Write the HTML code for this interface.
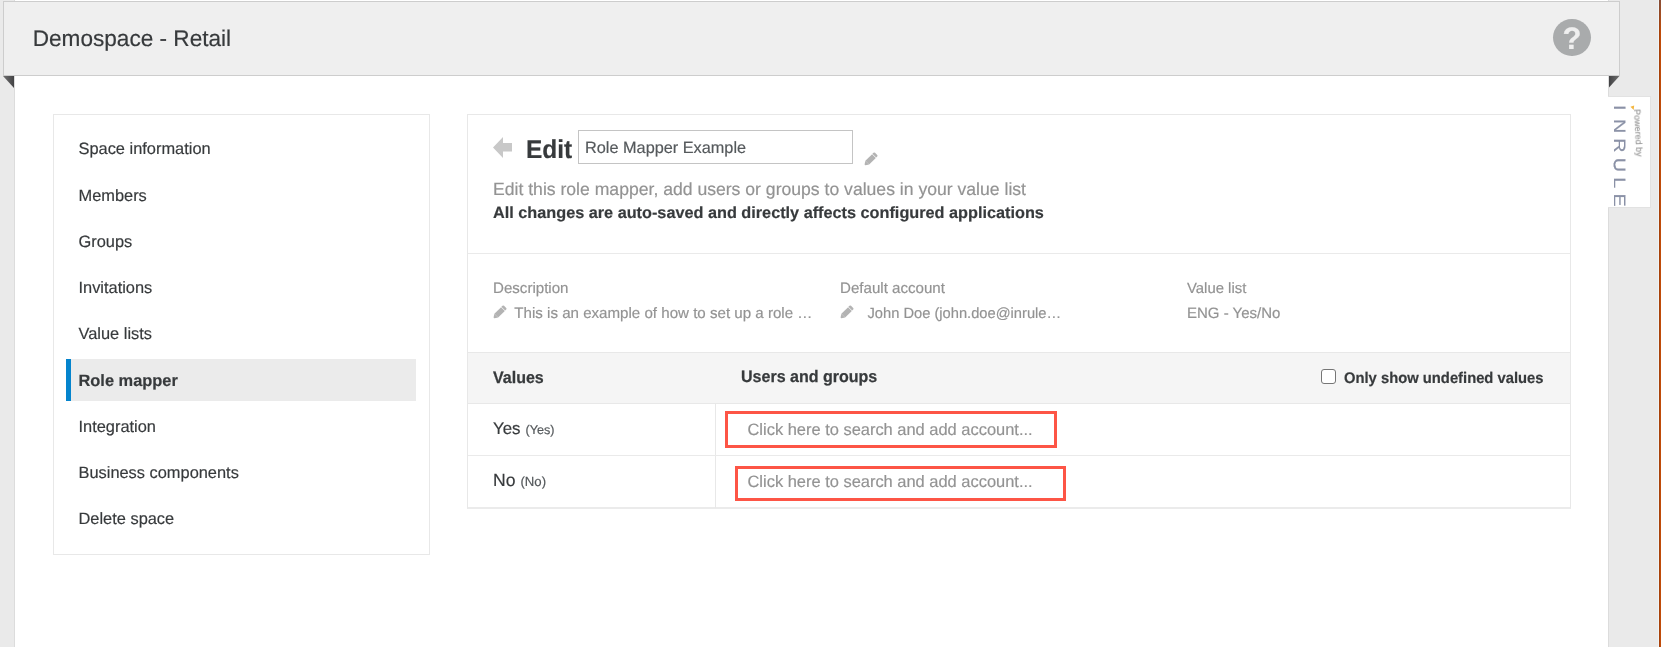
<!DOCTYPE html>
<html>
<head>
<meta charset="utf-8">
<title>Demospace - Retail</title>
<style>
*{box-sizing:border-box;margin:0;padding:0}
html,body{width:1661px;height:647px;overflow:hidden}
body{background:#eaeaea;font-family:"Liberation Sans",sans-serif;color:#373a3c;position:relative;text-rendering:geometricPrecision;-webkit-text-stroke:.18px}
#wrap{position:absolute;left:0;top:0;width:1661px;height:647px;will-change:transform}
.abs{position:absolute}
#strip{left:1658px;top:0;width:3px;height:647px;border-left:1px solid #f0f4f7;background:linear-gradient(90deg,#a8420a 0,#a8420a 50%,#c04c0a 50%,#c04c0a 100%)}
#strip2{left:1659px;top:0;width:2px;height:32px;background:linear-gradient(180deg,rgba(120,80,70,.75) 0,rgba(120,80,70,0) 100%)}
#content{left:14px;top:0;width:1595px;height:647px;background:#fff;border-left:1px solid #dcdcdc;border-right:1px solid #dcdcdc}
#header{left:3px;top:1px;width:1617px;height:75px;background:#efefef;border:1px solid #cdcdcd}
#title{left:32.7px;top:26px;font-size:22.6px;line-height:26px;color:#373a3c;white-space:nowrap}
.tri{width:0;height:0}
#triL{left:3px;top:76px;width:11px;height:12px;background:linear-gradient(90deg,#727272,#424244);clip-path:polygon(0 0,100% 0,100% 100%)}
#triR{left:1609px;top:76px;width:10.5px;height:11.5px;background:linear-gradient(90deg,#424244,#727272);clip-path:polygon(0 0,100% 0,0 100%)}
#help{left:1552.8px;top:18.8px;width:38px;height:37.6px;border-radius:50%;background:#a9abac;color:#efefef;font-weight:bold;font-size:31px;line-height:40.4px;text-align:center;padding-left:.3px;overflow:hidden}
#badge{left:1608px;top:96px;width:43px;height:112px;background:#fff;border:1px solid #e2e2e2;border-left:none}
#side{left:53px;top:114px;width:377px;height:441px;border:1px solid #e8e8e8;background:#fff}
.nav{position:absolute;left:78.5px;font-size:16.4px;line-height:20px;white-space:nowrap;color:#373a3c}
#active{left:66px;top:359px;width:350px;height:42px;background:#ebebeb;border-left:5px solid #0584cd}
#main{left:467px;top:114px;width:1104px;height:395px;border:1px solid #e8e8e8;border-bottom:2px solid #ebebeb;background:#fff}
.hl{position:absolute;left:468px;width:1102px;height:1px;background:#eaeaea}
.t{position:absolute;white-space:nowrap}
.g{color:#939393}
.redbox{position:absolute;border:3px solid #fd5546}
</style>
</head>
<body>
<div id="wrap">
<div id="content" class="abs"></div>
<div id="strip" class="abs"></div><div id="strip2" class="abs"></div>
<div id="triL" class="abs"></div>
<div id="triR" class="abs"></div>
<div id="header" class="abs"></div>
<div id="title" class="abs">Demospace - Retail</div>
<div id="help" class="abs">?</div>
<div id="badge" class="abs"></div>
<div class="t" id="inrule" style="left:1612px;top:105px;font-size:16.5px;line-height:14px;letter-spacing:4.3px;color:#8a91a6;transform-origin:0 0;transform:translate(14px,0) rotate(90deg) scaleX(1.2);filter:blur(.4px)"><span style="letter-spacing:7px">I</span>NRULE</div>
<div class="t" id="pby" style="left:1631.5px;top:109px;font-size:9px;line-height:9px;color:#999;transform-origin:0 0;transform:translate(9px,0) rotate(87deg);filter:blur(.35px)">Powered by</div>
<div class="abs tri" style="left:1631px;top:106px;border-top:4px solid #f4b63f;border-left:2px solid transparent;border-right:2px solid transparent;transform:rotate(-20deg)"></div>

<div id="side" class="abs"></div>
<div id="active" class="abs"></div>
<div class="nav" style="top:139px">Space information</div>
<div class="nav" style="top:186px">Members</div>
<div class="nav" style="top:232px">Groups</div>
<div class="nav" style="top:278px">Invitations</div>
<div class="nav" style="top:324px">Value lists</div>
<div class="nav" style="top:371px;font-weight:bold">Role mapper</div>
<div class="nav" style="top:417px">Integration</div>
<div class="nav" style="top:463px">Business components</div>
<div class="nav" style="top:509px">Delete space</div>

<div id="main" class="abs"></div>
<svg class="abs" style="left:493px;top:137px" width="19" height="21" viewBox="0 0 19 21"><path d="M0 10.5 L10 0 L10 6 L19 6 L19 14.5 L10 14.5 L10 21 Z" fill="#c8c8c8"/></svg>
<div class="t" style="left:525.7px;top:135px;font-size:25.8px;line-height:30px;font-weight:bold;transform:scaleX(.95);transform-origin:0 0">Edit</div>
<div class="abs" style="left:578px;top:130px;width:275px;height:34px;border:1px solid #c4c4c4;background:#fff"></div>
<div class="t" style="left:585px;top:138.6px;font-size:16.3px;line-height:19px;color:#55595c">Role Mapper Example</div>
<div class="t g" style="left:493px;top:179px;font-size:17.6px;line-height:20px">Edit this role mapper, add users or groups to values in your value list</div>
<div class="t" style="left:493px;top:204px;font-size:16.25px;line-height:19px;font-weight:bold">All changes are auto-saved and directly affects configured applications</div>
<svg class="abs" style="left:861.4px;top:148.8px" width="20" height="20" viewBox="-10 -10 20 20"><g transform="rotate(45)" fill="#b3b3b3"><path d="M-2.65 -4.6 L-2.65 -6.15 Q-2.65 -7.25 -1.5 -7.25 L1.5 -7.25 Q2.65 -7.25 2.65 -6.15 L2.65 -4.6 Z"/><rect x="-2.65" y="-4.2" width="5.3" height="9.5"/><path d="M-2.65 5.3 L2.65 5.3 L0.7 8.3 Q0 9.1 -0.7 8.3 Z"/></g></svg>
<svg class="abs" style="left:490.4px;top:301.9px" width="20" height="20" viewBox="-10 -10 20 20"><g transform="rotate(45)" fill="#b3b3b3"><path d="M-2.65 -4.6 L-2.65 -6.15 Q-2.65 -7.25 -1.5 -7.25 L1.5 -7.25 Q2.65 -7.25 2.65 -6.15 L2.65 -4.6 Z"/><rect x="-2.65" y="-4.2" width="5.3" height="9.5"/><path d="M-2.65 5.3 L2.65 5.3 L0.7 8.3 Q0 9.1 -0.7 8.3 Z"/></g></svg>
<svg class="abs" style="left:837.4px;top:301.9px" width="20" height="20" viewBox="-10 -10 20 20"><g transform="rotate(45)" fill="#b3b3b3"><path d="M-2.65 -4.6 L-2.65 -6.15 Q-2.65 -7.25 -1.5 -7.25 L1.5 -7.25 Q2.65 -7.25 2.65 -6.15 L2.65 -4.6 Z"/><rect x="-2.65" y="-4.2" width="5.3" height="9.5"/><path d="M-2.65 5.3 L2.65 5.3 L0.7 8.3 Q0 9.1 -0.7 8.3 Z"/></g></svg>
<div class="hl" style="top:253px"></div>

<div class="t g" style="left:493px;top:280px;font-size:15.1px;line-height:18px">Description</div>
<div class="t g" style="left:514.3px;top:305px;font-size:15.12px;line-height:18px">This is an example of how to set up a role …</div>
<div class="t g" style="left:840px;top:280px;font-size:15.1px;line-height:18px">Default account</div>
<div class="t g" style="left:867.5px;top:305px;font-size:14.7px;line-height:18px">John Doe (john.doe@inrule…</div>
<div class="t g" style="left:1187px;top:280px;font-size:14.9px;line-height:18px">Value list</div>
<div class="t g" style="left:1187px;top:305px;font-size:15px;line-height:18px">ENG - Yes/No</div>

<div class="abs" style="left:468px;top:352px;width:1102px;height:52px;background:#f5f5f5;border-top:1px solid #e8e8e8;border-bottom:1px solid #e8e8e8"></div>
<div class="t" style="left:492.7px;top:368.4px;font-size:16.6px;line-height:19px;font-weight:bold;transform:scaleX(.965);transform-origin:0 0;-webkit-text-stroke:.25px">Values</div>
<div class="t" style="left:741px;top:367.4px;font-size:16.6px;line-height:19px;font-weight:bold;transform:scaleX(.966);transform-origin:0 0;-webkit-text-stroke:.25px">Users and groups</div>
<div class="abs" style="left:1321px;top:369px;width:15px;height:15px;border:1.5px solid #767676;border-radius:3px;background:#fff"></div>
<div class="t" style="left:1344px;top:369.5px;font-size:15.4px;line-height:18px;font-weight:bold;transform:scaleX(.96);transform-origin:0 0;-webkit-text-stroke:.2px">Only show undefined values</div>

<div class="abs" style="left:715px;top:404px;width:1px;height:104px;background:#e8e8e8"></div>
<div class="hl" style="top:455px"></div>
<div class="t" style="left:493px;top:419px;font-size:16.9px;line-height:20px">Yes <span style="font-size:12.6px;color:#55595c;margin-left:.3px">(Yes)</span></div>
<div class="t" style="left:493px;top:470.4px;font-size:17.6px;line-height:20px">No <span style="font-size:13.2px;color:#55595c">(No)</span></div>
<div class="t g" style="left:747.5px;top:420px;font-size:16.45px;line-height:20px">Click here to search and add account...</div>
<div class="t g" style="left:747.5px;top:472px;font-size:16.45px;line-height:20px">Click here to search and add account...</div>
<div class="redbox" style="left:725px;top:411px;width:332px;height:37px"></div>
<div class="redbox" style="left:735px;top:466px;width:331px;height:35px"></div>
</div>
</body>
</html>
